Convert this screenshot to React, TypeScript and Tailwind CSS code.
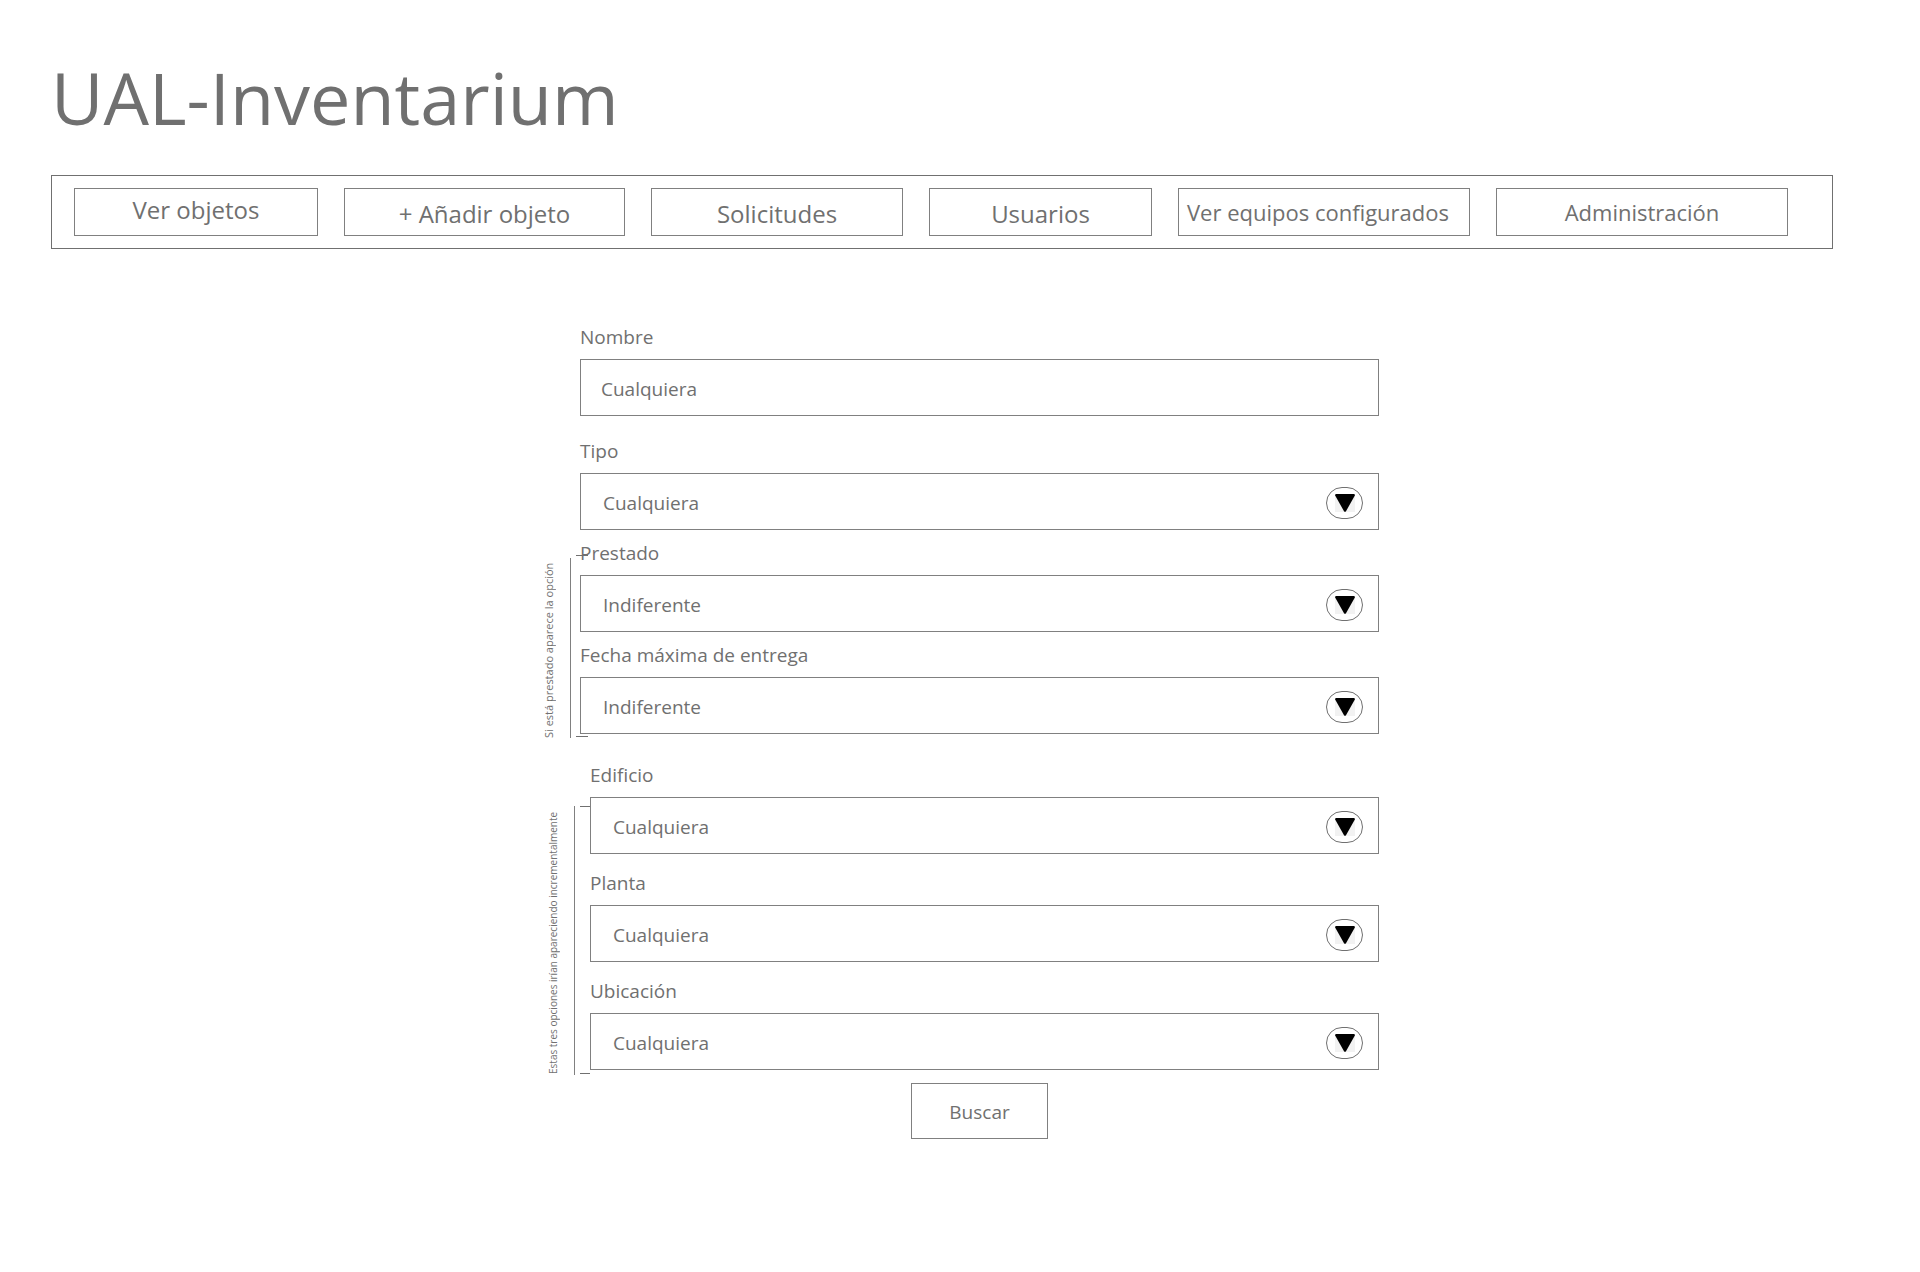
import React from "react";

const NAV = [
  { label: "Ver objetos", style: "text-[24px] pb-1" },
  { label: "+ Añadir objeto", style: "text-[24px] pt-1" },
  { label: "Solicitudes", style: "text-[24px] pt-1" },
  { label: "Usuarios", style: "text-[24px] pt-1" },
  { label: "Ver equipos configurados", style: "text-[22px] pr-3" },
  { label: "Administración", style: "text-[22px]" },
];

function Arrow() {
  return (
    <span className="pointer-events-none absolute right-4 top-3.5 flex h-8 w-[37px] items-center justify-center rounded-full border border-[#707070]">
      <svg className="h-[18px] w-5 bg-[#f2f2f2]" viewBox="0 0 20 18" aria-hidden="true">
        <path d="M1 0H19Q20.4 0.4 19.7 1.8L11 17.2Q10 18.4 9 17.2L0.3 1.8Q-0.4 0.4 1 0Z" fill="#000" />
      </svg>
    </span>
  );
}

function Label({ id, children }: { id: string; children: React.ReactNode }) {
  return (
    <label htmlFor={id} className="mb-[7px] block leading-[30px]">
      {children}
    </label>
  );
}

function SelectField({ id, label, value }: { id: string; label: string; value: string }) {
  return (
    <div>
      <Label id={id}>{label}</Label>
      <div className="relative">
        <select
          id={id}
          defaultValue={value}
          className="block h-[57px] w-full appearance-none rounded-none border border-[#808080] bg-transparent pl-[22px] pr-16 pt-1 outline-none"
        >
          <option>{value}</option>
        </select>
        <Arrow />
      </div>
    </div>
  );
}

function Bracket({ className, lineClass }: { className: string; lineClass: string }) {
  return (
    <div className={`flex gap-[5px] ${className}`} aria-hidden="true">
      <div className={`w-px bg-[#808080] ${lineClass}`} />
      <div className="mb-px flex-1 border-y border-[#707070]" />
    </div>
  );
}

export default function App() {
  return (
    <div className="min-h-screen bg-white pb-10 pt-[49px] font-['Open_Sans',sans-serif] text-[#707070]">
      <header className="ml-[51px] mr-[87px]">
        <h1 className="text-[72px] leading-[96px]">UAL-Inventarium</h1>
        <nav className="mt-[30px] grid grid-cols-[244fr_281fr_252fr_223fr_292fr_292fr] gap-[26px] border border-[#707070] py-3 pl-[22px] pr-11">
          {NAV.map((n) => (
            <button
              key={n.label}
              type="button"
              className={`flex h-12 items-center justify-center whitespace-nowrap border border-[#808080] ${n.style}`}
            >
              {n.label}
            </button>
          ))}
        </nav>
      </header>

      <main className="mt-[73px] grid grid-cols-[580fr_799fr_541fr] text-[19px]">
        <form className="col-start-2 min-w-0" onSubmit={(e) => e.preventDefault()}>
          <div>
            <Label id="nombre">Nombre</Label>
            <input
              id="nombre"
              type="text"
              defaultValue="Cualquiera"
              className="block h-[57px] w-full border border-[#808080] bg-transparent px-5 pt-0.5 outline-none"
            />
          </div>

          <div className="mt-5">
            <SelectField id="tipo" label="Tipo" value="Cualquiera" />
          </div>

          <div className="-ml-[38px] mt-2 flex">
            <p className="-mb-1 mr-3.5 w-3.5 rotate-180 whitespace-nowrap text-[11px] leading-[14px] [writing-mode:vertical-rl]">
              Si está prestado aparece la opción
            </p>
            <Bracket className="-mb-1 -mr-2 mt-[17px] w-[18px]" lineClass="mt-[3px]" />
            <div className="flex flex-1 flex-col gap-2">
              <SelectField id="prestado" label="Prestado" value="Indiferente" />
              <SelectField id="fecha" label="Fecha máxima de entrega" value="Indiferente" />
            </div>
          </div>

          <div className="-ml-[34px] mt-[26px] flex">
            <p className="-mb-1 mr-3.5 w-3.5 rotate-180 whitespace-nowrap text-[10px] leading-[14px] [writing-mode:vertical-rl]">
              Estas tres opciones irían apareciendo incrementalmente
            </p>
            <Bracket className="-mb-[5px] mt-[46px] w-4" lineClass="mt-0" />
            <div className="flex flex-1 flex-col gap-3.5">
              <SelectField id="edificio" label="Edificio" value="Cualquiera" />
              <SelectField id="planta" label="Planta" value="Cualquiera" />
              <SelectField id="ubicacion" label="Ubicación" value="Cualquiera" />
            </div>
          </div>

          <button
            type="submit"
            className="mx-auto mt-[13px] block h-14 w-[137px] border border-[#808080] pt-0.5"
          >
            Buscar
          </button>
        </form>
      </main>
    </div>
  );
}
